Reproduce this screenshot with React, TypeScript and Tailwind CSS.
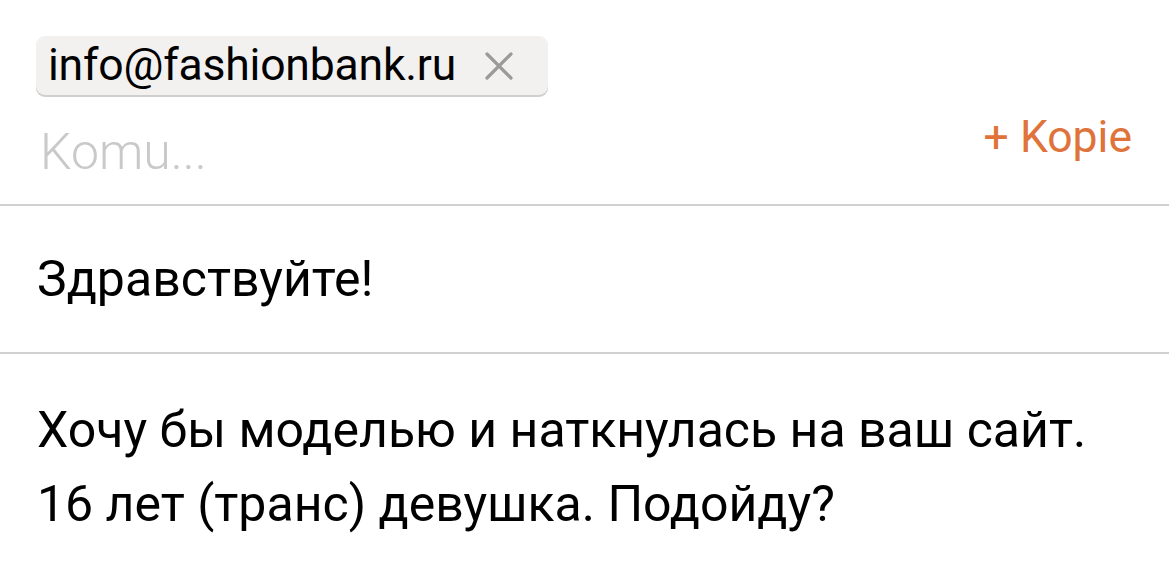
import React from "react";

export default function App() {
  return (
    <div
      className="w-[1169px] h-[575px] bg-white overflow-hidden text-black"
      style={{ fontFamily: "Roboto, 'Noto Sans', sans-serif" }}
    >
      <div className="h-[204px] pl-[36px] pr-[37px] pt-[36px] flex flex-col">
        <div className="flex">
          <div className="h-[59px] w-[512px] rounded-[9px] bg-[#f2f1f0] shadow-[0_2px_0_#cfcfcf] flex items-center pl-[12px] pr-[34px] justify-between">
            <span className="text-[44.5px] leading-none tracking-[-0.2px]">info@fashionbank.ru</span>
            <svg width="30" height="30" viewBox="0 0 30 30" className="shrink-0">
              <path d="M3 3 L27 27 M27 3 L3 27" stroke="#9a9a9a" strokeWidth="3.2" strokeLinecap="round" />
            </svg>
          </div>
        </div>
        <div className="flex justify-between items-start mt-[20px]">
          <span className="pl-[4px] text-[50px] font-light leading-none text-[#c9c9c9] mt-[12px]">Komu...</span>
          <span className="text-[44.5px] leading-none text-[#e0733a]">+ Kopie</span>
        </div>
      </div>
      <div className="h-[2px] bg-[#d0d0d0]" />
      <div className="h-[146px] pl-[37px] flex items-center">
        <span className="text-[50px] leading-none">Здравствуйте!</span>
      </div>
      <div className="h-[2px] bg-[#d0d0d0]" />
      <div className="pl-[37px] pt-[39px] text-[50px] leading-[74px]">
        <div>Хочу бы моделью и наткнулась на ваш сайт.</div>
        <div>16 лет (транс) девушка. Подойду?</div>
      </div>
    </div>
  );
}
